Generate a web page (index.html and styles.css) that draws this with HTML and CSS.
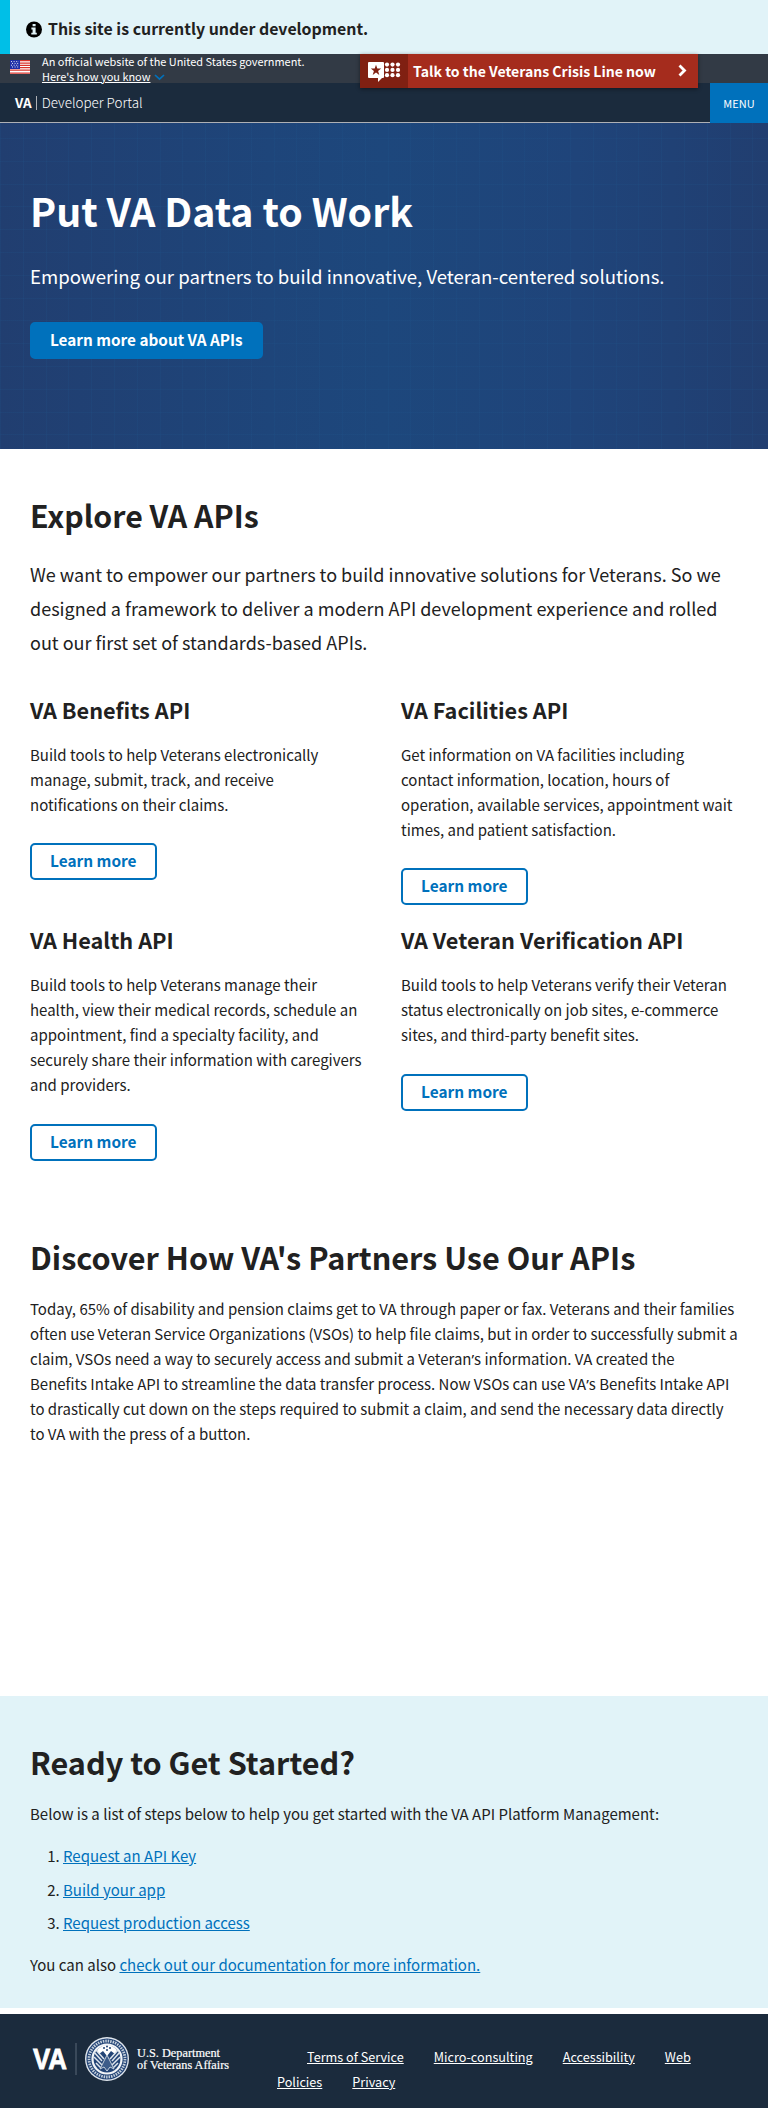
FILE: index.html
```
<!DOCTYPE html>
<html lang="en">
<head>
<meta charset="utf-8">
<title>VA | Developer Portal</title>
<link rel="stylesheet" href="styles.css">
</head>
<body>
<div class="notice">
  <svg class="notice-icon" width="16" height="17" viewBox="0 0 16 17"><circle cx="8" cy="8.5" r="8" fill="#000"/><path d="M6.6 2.9h3v2.4h-3zM5.4 6.6h4.2v5.1h1.2v1.8H5.3v-1.8h1.3V8.4H5.4z" fill="#e1f3f8"/></svg>
  <strong>This site is currently under development.</strong>
</div>
<header class="header">
  <div class="gov">
    <svg class="flag" width="20" height="14" viewBox="0 0 20 14"><path fill="#fff" d="M0 0h20v14H0z"/><path stroke="#d9332b" stroke-width="1.25" d="M0 .7h20M0 3h20M0 5.3h20M0 7.6h20M0 10h20M0 13h20"/><path fill="#1e2fa8" d="M0 0h10v9H0z"/><path stroke="#fff" stroke-width=".9" stroke-dasharray="1 1.6" d="M1 1.6h8M2 3.4h7M1 5.2h8M2 7h7"/></svg>
    <div class="gov-text">An official website of the United States government.<br><a href="#">Here's how you know</a><svg class="down" width="11" height="7" viewBox="0 0 11 7"><path d="M1 1l4.5 4.2L10 1" fill="none" stroke="#0071bc" stroke-width="1.7"/></svg></div>
  </div>
  <a class="crisis" href="#">
    <span class="crisis-icon">
      <svg width="34" height="22" viewBox="0 0 34 22"><path fill="#fff" d="M1 0h14a1 1 0 0 1 1 1v14a1 1 0 0 1-1 1h-1l-4 4v-4H1a1 1 0 0 1-1-1V1a1 1 0 0 1 1-1z"/><path fill="#802012" d="M8 2.8l1.3 3.8h3.9l-3.1 2.4 1.2 3.9L8 10.6l-3.3 2.3L5.9 9 2.8 6.6h3.9z"/><g fill="#fff"><circle cx="19" cy="2.6" r="2.1"/><circle cx="24.5" cy="2.6" r="2.1"/><circle cx="30" cy="2.6" r="2.1"/><circle cx="19" cy="7.9" r="2.1"/><circle cx="24.5" cy="7.9" r="2.1"/><circle cx="30" cy="7.9" r="2.1"/><circle cx="19" cy="13.2" r="2.1"/><circle cx="24.5" cy="13.2" r="2.1"/><circle cx="30" cy="13.2" r="2.1"/></g></svg>
    </span>
    <span class="crisis-label">Talk to the Veterans Crisis Line now</span>
    <svg class="crisis-arrow" width="9" height="13" viewBox="0 0 9 13"><path d="M1.5 1.5l5 5-5 5" fill="none" stroke="#fff" stroke-width="2.8"/></svg>
  </a>
  <div class="nav">
    <a class="brand" href="#"><b>VA</b><i></i><span>Developer Portal</span></a>
    <button class="menu">MENU</button>
  </div>
</header>
<main>
  <section class="hero">
    <h1>Put VA Data to Work</h1>
    <p>Empowering our partners to build innovative, Veteran-centered solutions.</p>
    <a class="btn btn-solid" href="#">Learn more about VA APIs</a>
  </section>
  <section class="explore">
    <h2>Explore VA APIs</h2>
    <p class="lead">We want to empower our partners to build innovative solutions for Veterans. So we designed a framework to deliver a modern API development experience and rolled out our first set of standards-based APIs.</p>
    <div class="grid">
      <article><h3>VA Benefits API</h3><p>Build tools to help Veterans electronically manage, submit, track, and receive notifications on their claims.</p><a class="btn" href="#">Learn more</a></article>
      <article><h3>VA Facilities API</h3><p>Get information on VA facilities including contact information, location, hours of operation, available services, appointment wait times, and patient satisfaction.</p><a class="btn" href="#">Learn more</a></article>
      <article><h3>VA Health API</h3><p>Build tools to help Veterans manage their health, view their medical records, schedule an appointment, find a specialty facility, and securely share their information with caregivers and providers.</p><a class="btn" href="#">Learn more</a></article>
      <article><h3>VA Veteran Verification API</h3><p>Build tools to help Veterans verify their Veteran status electronically on job sites, e-commerce sites, and third-party benefit sites.</p><a class="btn" href="#">Learn more</a></article>
    </div>
  </section>
  <section class="discover">
    <h2>Discover How VA's Partners Use Our APIs</h2>
    <p>Today, 65% of disability and pension claims get to VA through paper or fax. Veterans and their families<br>often use Veteran Service Organizations (VSOs) to help file claims, but in order to successfully submit a<br>claim, VSOs need a way to securely access and submit a Veteran<span class="apos">’</span>s information. VA created the<br>Benefits Intake API to streamline the data transfer process. Now VSOs can use VA<span class="apos">’</span>s Benefits Intake API<br>to drastically cut down on the steps required to submit a claim, and send the necessary data directly<br>to VA with the press of a button.</p>
  </section>
  <section class="ready">
    <h2>Ready to Get Started?</h2>
    <p>Below is a list of steps below to help you get started with the VA API Platform Management:</p>
    <ol>
      <li><a href="#">Request an API Key</a></li>
      <li><a href="#">Build your app</a></li>
      <li><a href="#">Request production access</a></li>
    </ol>
    <p>You can also <a href="#">check out our documentation for more information.</a></p>
  </section>
</main>
<footer class="footer">
  <svg class="logo" width="200" height="48" viewBox="0 0 200 48">
    <text class="logo-va" x="3" y="34" textLength="34" lengthAdjust="spacingAndGlyphs">VA</text>
    <path d="M46 8v32" stroke="#5b6878"/>
    <circle cx="77" cy="24" r="22" fill="#dfe5ec"/>
    <circle cx="77" cy="24" r="20.6" fill="#234476"/>
    <circle cx="77" cy="24" r="18" fill="none" stroke="#c4cfdb" stroke-width="2.8" stroke-dasharray="1.5 1"/>
    <circle cx="77" cy="24" r="15.6" fill="#f1f4f7"/>
    <circle cx="77" cy="24" r="13.4" fill="#234476"/>
    <path fill="#fff" d="M67 15q10-10 20 0l-2 4-4-3-4 5-4-5-4 3z"/>
    <g fill="#234476"><circle cx="74" cy="13" r="1"/><circle cx="77" cy="11.500" r="1"/><circle cx="80" cy="13" r="1"/><circle cx="77" cy="15" r="1"/></g>
    <path d="M64 17l8 9M66 15l8 9M90 17l-8 9M88 15l-8 9M64 22l8 8M90 22l-8 8M66 28l5 5M88 28l-5 5" stroke="#dfe5ec" stroke-width="1.500"/>
    <path d="M70 34l7-14 7 14-4-2-3 4-3-4z" fill="#3d5c89" stroke="#c4cfdb"/>
    <text class="logo-name" x="107" y="22" textLength="83" lengthAdjust="spacingAndGlyphs">U.S. Department</text>
    <text class="logo-name" x="107" y="34" textLength="92" lengthAdjust="spacingAndGlyphs">of Veterans Affairs</text>
  </svg>
  <nav class="links"><a href="#">Terms of Service</a><a href="#">Micro-consulting</a><a href="#">Accessibility</a><a href="#">Web Policies</a><a href="#">Privacy</a></nav>
</footer>
</body>
</html>
```
FILE: styles.css
```
* { box-sizing: border-box; }
body { margin: 0; color: #212121; background: #fff; font: 15px/25px "Noto Sans CJK SC", "Noto Sans", sans-serif; }
h1, h2, h3, p, ol { margin: 0; }
h1, h2, h3 { font-weight: 700; }
h2 { font-size: 30.6px; line-height: 40px; }
a { color: #0071bc; }
svg { display: block; flex: none; }

.notice { display: flex; height: 54px; padding: 18px 0 0 16px; border-left: 10px solid #00bfe7; background: #e1f3f8; font-size: 15.9px; line-height: 22px; }
.notice-icon { margin: 3px 6px 0 0; }

.header { position: relative; }
.gov { display: flex; height: 29px; padding-left: 10px; background: #323a45; color: #fff; font-size: 10.95px; line-height: 15px; }
.flag { margin: 6px 12px 0 0; }
.gov-text a { color: #fff; text-underline-offset: 1px; }
.down { display: inline-block; margin-left: 4px; }
.crisis { position: absolute; z-index: 1; left: 360px; top: 0; display: flex; width: 338px; height: 34px; background: #a52c1d; color: #fff; font-size: 14.05px; font-weight: 700; line-height: 34px; text-decoration: none; box-shadow: 0 1px 4px rgba(0, 0, 0, .45); }
.crisis-icon { width: 48px; padding: 8px 0 0 8px; background: #802012; }
.crisis-label { padding-left: 5px; }
.crisis-arrow { margin: 10px 0 0 22px; }
.nav { display: flex; justify-content: space-between; height: 40px; background: #1b2b3d; }
.brand { display: flex; align-items: center; flex: 1; padding-left: 15px; border-bottom: 1px solid #aeb0b5; color: #fff; font-size: 13.45px; font-weight: 300; text-decoration: none; }
.brand b { font-weight: 700; }
.brand i { width: 1px; height: 14px; margin: 0 5px 0 4px; background: #aeb0b5; }
.menu { width: 58px; padding: 0 0 1px; border: 0; background: #0071bc; color: #fff; font: 400 11px/20px "Noto Sans CJK SC", sans-serif; }

.hero {
  height: 326px; padding: 63px 30px 0; color: #fff;
  background:
    repeating-linear-gradient(90deg, rgba(32, 90, 145, .16) 0 1px, transparent 1px 22.8px),
    repeating-linear-gradient(180deg, transparent 0 15px, rgba(32, 90, 145, .16) 15px 16px, transparent 16px 22.8px),
    linear-gradient(90deg, #213e70 0, #1e457a 35%, #1d477c 50%, #1f447a 75%, #213e70 100%);
}
.hero h1 { font-size: 39.25px; line-height: 48px; }
.hero p { margin: 27px 0 31px; font-size: 18.58px; line-height: 30px; }
.btn { display: inline-block; vertical-align: top; height: 37px; padding: 0 18px; border: 2px solid #0071bc; border-radius: 5px; font-size: 15.4px; font-weight: 700; line-height: 31.500px; text-decoration: none; }
.btn-solid { background: #0071bc; color: #fff; font-size: 15.3px; }

.explore { padding: 46px 30px 0; }
.explore h2 { font-size: 30.3px; }
.lead { margin: 22px 0 36px; font-size: 18.03px; line-height: 34px; }
.grid { display: grid; grid-template-columns: 334px 1fr; gap: 20px 37px; }
.grid h3 { margin-bottom: 17px; font-size: 21.7px; line-height: 30px; }
.grid p { margin-bottom: 26.4px; }
.discover { height: 535.2px; padding: 76px 30px 0; }
.discover h2 { margin-bottom: 19px; }
.discover p { font-size: 14.98px; white-space: nowrap; }
.apos { font-family: "Noto Sans", sans-serif; line-height: 1; }
.ready { height: 312px; padding: 46px 30px 0; background: #e1f3f8; }
.ready h2 { margin-bottom: 19px; }
.ready ol { margin: 17.2px 0 16.8px; padding-left: 33px; }
.ready li + li { margin-top: 8.5px; }

.footer { display: flex; height: 94px; margin-top: 6px; padding-left: 30px; background: #1b2b3d; }
.logo { margin-top: 21px; }
.logo-va { font: 700 29px "Liberation Sans", sans-serif; fill: #fff; stroke: #fff; stroke-width: .8px; }
.logo-name { font: 12.5px "Liberation Serif", serif; fill: #fff; stroke: #fff; stroke-width: .2px; }
.links { width: 453px; margin-left: 47px; padding-top: 30px; font-size: 12.67px; }
.links a { margin-left: 30px; color: #fff; }
```
